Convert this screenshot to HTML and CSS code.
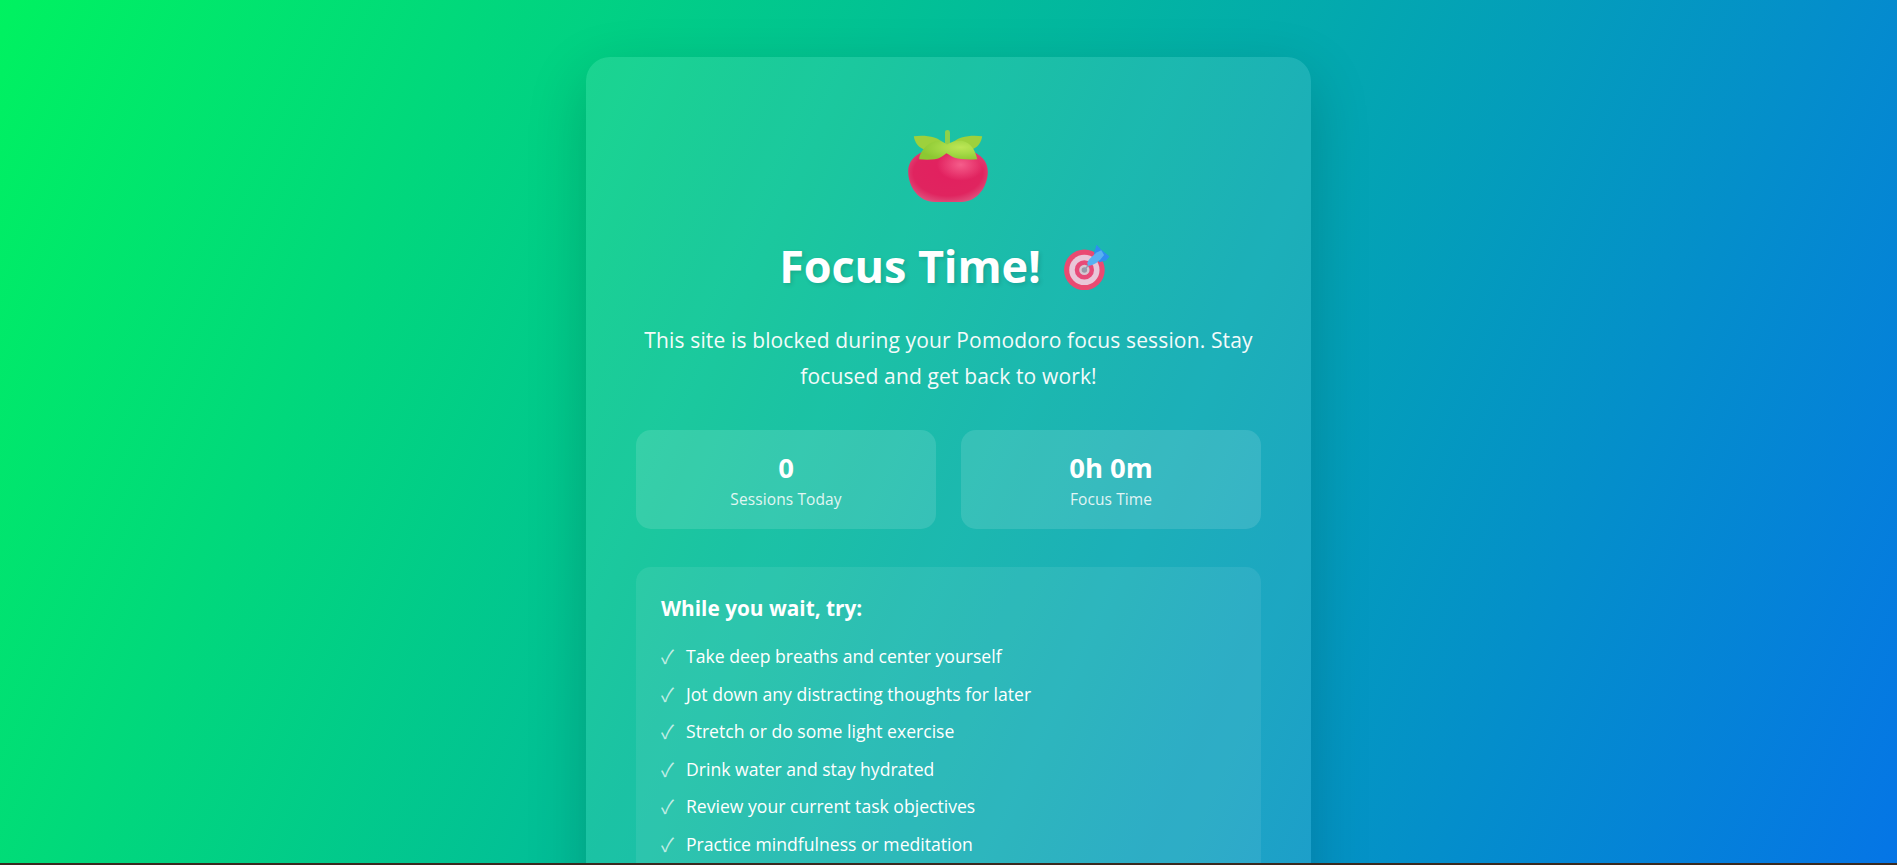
FILE: index.html
```html
<!DOCTYPE html>
<html lang="en">
<head>
<meta charset="utf-8">
<title>Focus Time!</title>
<link rel="stylesheet" href="styles.css">
</head>
<body>
<main class="page">
  <section class="card">
    <div class="logo">
      <svg class="tomato" viewBox="55 30 243 220" aria-hidden="true">
        <defs>
          <radialGradient id="tb" cx="0.5" cy="0.45" r="0.62">
            <stop offset="0" stop-color="#e2205f"/>
            <stop offset="0.7" stop-color="#e0245f"/>
            <stop offset="1" stop-color="#df5a84"/>
          </radialGradient>
          <radialGradient id="th" cx="0.66" cy="0.3" r="0.3">
            <stop offset="0" stop-color="#fa6c96" stop-opacity="0.8"/>
            <stop offset="1" stop-color="#fa6c96" stop-opacity="0"/>
          </radialGradient>
          <radialGradient id="lf" cx="0.72" cy="0.35" r="0.7">
            <stop offset="0" stop-color="#bde655"/>
            <stop offset="0.5" stop-color="#a4d945"/>
            <stop offset="1" stop-color="#8cc832"/>
          </radialGradient>
        </defs>
        <path d="M175 88C240 80 295 105 295 155C295 202 262 247 215 247H135C88 247 55 202 55 155C55 105 110 80 175 88Z" fill="url(#tb)"/>
        <path d="M175 88C240 80 295 105 295 155C295 202 262 247 215 247H135C88 247 55 202 55 155C55 105 110 80 175 88Z" fill="url(#th)"/>
        <rect x="166" y="30" width="15" height="50" rx="7.5" fill="#8ed14b"/>
        <path d="M72 49C105 44 145 50 162 70L108 90C88 86 74 68 72 49Z" fill="#9dd13c"/>
        <path d="M278 49C245 44 205 50 186 70L242 90C262 86 276 68 278 49Z" fill="#9dd13c"/>
        <path d="M88 118C90 95 115 64 145 63C155 63 165 68 172 74C185 64 205 60 220 63C242 68 258 90 263 118C235 120 210 118 195 114C185 110 178 104 170 100C160 108 150 116 135 118C120 120 105 120 88 118Z" fill="url(#lf)"/>
      </svg>
    </div>
    <h1 class="title">Focus Time!
      <svg class="target" viewBox="35 25 145 130" aria-hidden="true">
        <circle cx="97" cy="97" r="59" fill="#ea4a72"/>
        <circle cx="97" cy="97" r="44" fill="#e9c6d8"/>
        <circle cx="97" cy="97" r="28" fill="#e84a78"/>
        <circle cx="97" cy="97" r="15" fill="#d6c8d2"/>
        <circle cx="97" cy="97" r="8" fill="#9a9aa8"/>
        <path d="M97 97L112 80" stroke="#8f9fb5" stroke-width="4"/>
        <path d="M132 24L145 38L170 58L160 70L140 75L125 50Z" fill="#2f8ef0"/>
        <path d="M105 78C108 66 122 55 134 46L146 40L154 54L144 66C132 78 118 86 108 84Z" fill="#58b2f2"/>
      </svg>
    </h1>
    <p class="lead">This site is blocked during your Pomodoro focus session. Stay focused and get back to work!</p>
    <div class="stats">
      <div class="stat">
        <div class="stat-value">0</div>
        <div class="stat-label">Sessions Today</div>
      </div>
      <div class="stat">
        <div class="stat-value">0h 0m</div>
        <div class="stat-label">Focus Time</div>
      </div>
    </div>
    <div class="tips">
      <h2 class="tips-title">While you wait, try:</h2>
      <ul class="tips-list">
        <li class="tip">Take deep breaths and center yourself</li>
        <li class="tip">Jot down any distracting thoughts for later</li>
        <li class="tip">Stretch or do some light exercise</li>
        <li class="tip">Drink water and stay hydrated</li>
        <li class="tip">Review your current task objectives</li>
        <li class="tip">Practice mindfulness or meditation</li>
      </ul>
    </div>
  </section>
</main>
<div class="edge"></div>
</body>
</html>
```
FILE: styles.css
```css
* { box-sizing: border-box; }
html, body { margin: 0; height: 865px; overflow: hidden; }
body {
  font-family: "Open Sans", "Noto Sans", sans-serif;
  color: #fff;
  background: #3a2a20;
}
.page {
  height: 863px;
  overflow: hidden;
  padding-top: 57px;
  display: flex;
  justify-content: center;
  align-items: flex-start;
  background: linear-gradient(115deg, #00f260 0%, #0575e6 100%);
}
.edge { height: 2px; background: #3a2a20; }
.card {
  width: 725px;
  flex: none;
  padding: 73px 50px 50px;
  border-radius: 24px;
  background: rgba(255, 255, 255, 0.1);
  box-shadow: 0 20px 60px rgba(0, 0, 0, 0.18);
  text-align: center;
}
.logo { display: flex; justify-content: center; }
.tomato { width: 81px; height: 73px; display: block; }
.title {
  margin: 27px 0 0;
  height: 70px;
  padding-right: 5px;
  display: flex;
  justify-content: center;
  align-items: center;
  gap: 22px;
  font-size: 45px;
  font-weight: 700;
  letter-spacing: -0.1px;
  text-shadow: 2px 2px 4px rgba(0, 0, 0, 0.12);
}
.target { width: 50px; height: 45px; margin-top: 4px; display: block; }
.lead {
  margin: 22px 0 0;
  font-size: 21px;
  line-height: 36px;
  letter-spacing: 0.14px;
  opacity: 0.95;
}
.stats {
  display: grid;
  grid-template-columns: 1fr 1fr;
  gap: 25px;
  margin-top: 36px;
}
.stat {
  height: 99px;
  padding-top: 18px;
  border-radius: 15px;
  background: rgba(255, 255, 255, 0.12);
}
.stat-value { font-size: 27.5px; font-weight: 700; line-height: 40px; }
.stat-label { font-size: 15.5px; line-height: 22px; opacity: 0.85; letter-spacing: 0.1px; }
.tips {
  margin-top: 38px;
  padding: 25px;
  border-radius: 15px;
  background: rgba(255, 255, 255, 0.08);
  text-align: left;
}
.tips-title { margin: 0 0 14px; font-size: 20.8px; font-weight: 700; line-height: 32px; }
.tips-list { margin: 0; padding: 0; list-style: none; }
.tip { font-size: 17.6px; line-height: 37.5px; display: flex; gap: 9px; }
.tip::before { content: "✓"; font-family: "Noto Sans CJK SC", "DejaVu Sans", sans-serif; font-size: 19px; line-height: 35px; opacity: 0.7; width: 16px; }
```
